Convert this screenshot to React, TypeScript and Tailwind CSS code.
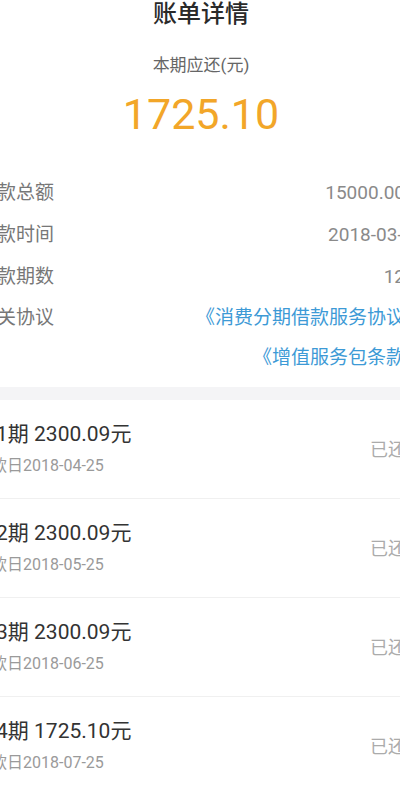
import React from "react";

const infoRows = [
  { label: "借款总额", value: "15000.00元" },
  { label: "借款时间", value: "2018-03-25" },
  { label: "借款期数", value: "12期" },
];

const periods = [
  { no: 1, amount: "2300.09", date: "2018-04-25" },
  { no: 2, amount: "2300.09", date: "2018-05-25" },
  { no: 3, amount: "2300.09", date: "2018-06-25" },
  { no: 4, amount: "1725.10", date: "2018-07-25" },
];

export default function App() {
  return (
    <div
      className="w-[400px] h-[789px] overflow-hidden bg-white"
      style={{ fontFamily: 'Roboto, "Noto Sans CJK SC", sans-serif' }}
    >
      <div className="w-[446px] ml-[-22px]">
        {/* header summary */}
        <div className="flex flex-col items-center">
          <h1 className="h-[28px] leading-[28px] text-[24px] font-medium text-[#2a2a2a]">账单详情</h1>
          <p className="mt-[25px] leading-[24px] text-[17px] text-[#666666]">本期应还(元)</p>
          <p className="mt-[12px] leading-[50px] text-[43px] text-[#f2a629]">1725.10</p>
        </div>

        {/* loan info */}
        <div className="mt-[33px]">
          {infoRows.map((row) => (
            <div key={row.label} className="flex justify-between leading-[42px] text-[19px]">
              <span className="text-[#777777]">{row.label}</span>
              <span className="text-[#8a8a8a]">{row.value}</span>
            </div>
          ))}
          <div className="flex justify-between leading-[40px] text-[19px]">
            <span className="text-[#777777]">相关协议</span>
            <div className="flex flex-col items-end text-[#3d9ad6]">
              <span>《消费分期借款服务协议》</span>
              <span>《增值服务包条款》</span>
            </div>
          </div>
        </div>

        <div className="mt-[9px] h-[13px] bg-[#f4f4f6] -mx-[20px]" />

        {/* repayment periods */}
        <div>
          {periods.map((p) => (
            <div
              key={p.no}
              className="flex items-center justify-between border-b border-[#f0f0f0] pt-[22px] pb-[22px]"
            >
              <div className="flex flex-col ml-[-3px]">
                <span className="leading-[24px] text-[21px] text-[#333333]">
                  第{p.no}期 {p.amount}元
                </span>
                <span className="mt-[10px] leading-[20px] text-[16px] text-[#9a9a9a]">
                  还款日{p.date}
                </span>
              </div>
              <span className="text-[18px] text-[#ababab]">已还清</span>
            </div>
          ))}
        </div>
      </div>
    </div>
  );
}
